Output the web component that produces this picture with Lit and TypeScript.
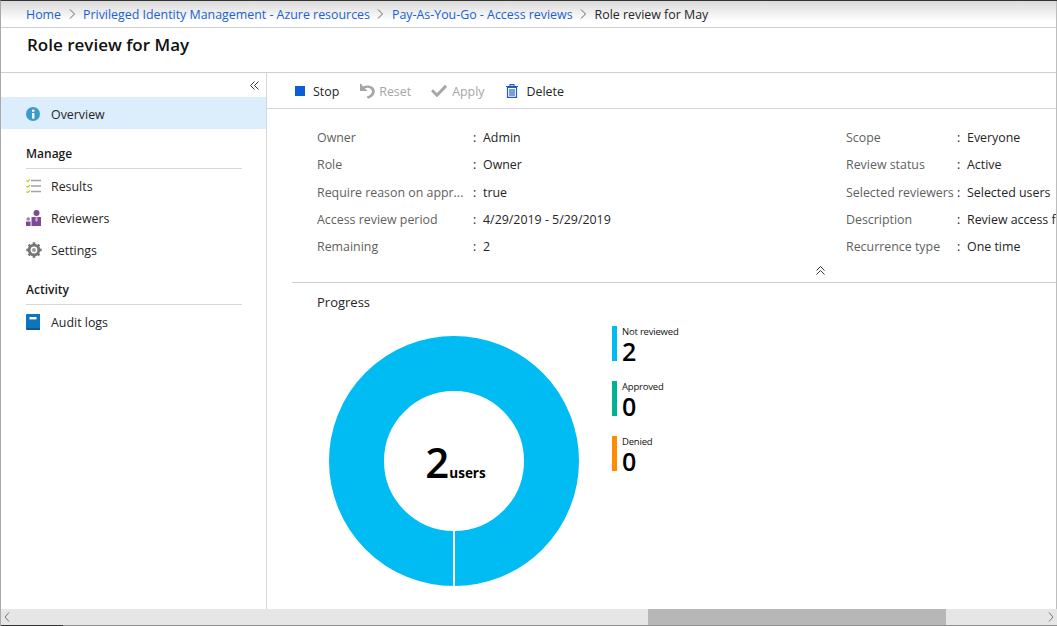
import { LitElement, html, css, svg } from 'lit';
import { customElement } from 'lit/decorators.js';

const chevron = html`<svg class="crumb-sep" width="7" height="10" viewBox="0 0 7 10"><path d="M1 .5 5.500 5 1 9.500" fill="none" stroke="#666" stroke-width="1"/></svg>`;

const icons = {
  info: html`<svg width="14" height="14" viewBox="0 0 14 14"><circle cx="7" cy="7" r="7" fill="#3c9bcb"/><rect x="6" y="6" width="2.400" height="5.600" fill="#fff"/><rect x="6" y="2.600" width="2.400" height="2.200" fill="#fff"/></svg>`,
  results: html`<svg width="15" height="14" viewBox="0 0 15 14">
    <path d="M.5 1.500l1.200 1.200L4 .3M.5 7l1.200 1.200L4 5.800M.5 12.500l1.200 1.200L4 11.300" fill="none" stroke="#b4cf2a" stroke-width="1.100"/>
    <path d="M5 1.500h10M5 7h10M5 12.500h10" stroke="#a3a3a3" stroke-width="1.500"/></svg>`,
  reviewers: html`<svg width="15" height="16" viewBox="0 0 15 16">
    <circle cx="10.500" cy="3" r="3" fill="#804998"/><path d="M5.500 7h9.500v9H5.500z" fill="#804998"/>
    <circle cx="2.200" cy="9" r="1.800" fill="#a67ab8"/><path d="M0 11.500h4.600V16H0z" fill="#804998"/>
    <path d="M9.700 7h1.600l.4 3.500-1.200 1.500-1.200-1.500z" fill="#c9aed6"/></svg>`,
  gear: html`<svg width="16" height="16" viewBox="0 0 16 16"><circle cx="8" cy="8" r="4.800" fill="none" stroke="#767676" stroke-width="3"/>
    <path d="M8 .3v15.400M.3 8h15.400M2.600 2.600l10.800 10.800M13.400 2.600 2.600 13.400" stroke="#767676" stroke-width="2.600"/><circle cx="8" cy="8" r="3.400" fill="#fff"/><circle cx="8" cy="8" r="2" fill="#9a9a9a"/></svg>`,
  book: html`<svg width="14" height="16" viewBox="0 0 14 16"><path d="M0 1a1 1 0 0 1 1-1h13v14H1v2a1 1 0 0 1-1-1z" fill="#0f74bd"/><path d="M0 14.500 1 14h13v2H1z" fill="#0a5a96"/><rect x="3.500" y="3" width="7" height="2.400" fill="#fff"/></svg>`,
  stop: html`<svg width="10" height="10" viewBox="0 0 10 10"><rect width="10" height="10" fill="#0b5ed7"/></svg>`,
  reset: html`<svg width="16" height="16" viewBox="0 0 16 16"><path d="M1 .5V8h7.500L5.800 5.300C8.500 3.800 13 5 13 8.500c0 2.300-2 4-5.500 5.300L9 15.800c4.500-1.500 6.800-4 6.800-7.300 0-5-5.800-7.500-11.800-5L2.500 1.200z" fill="#a6a6a6"/></svg>`,
  apply: html`<svg width="16" height="13" viewBox="0 0 16 13"><path d="M1 6.200l5 5L15 1.800" fill="none" stroke="#a6a6a6" stroke-width="3"/></svg>`,
  trash: html`<svg width="12" height="14" viewBox="0 0 12 14"><path d="M0 2.500h12M4 2V.7h4V2" fill="none" stroke="#1d5fbf" stroke-width="1.200"/><path d="M1.500 3.500h9v9.900h-9z" fill="none" stroke="#1d5fbf" stroke-width="1.200"/><path d="M4 5v7M6 5v7M8 5v7" stroke="#1d5fbf" stroke-width="1.200"/></svg>`,
};

const detailsLeft = [
  ['Owner', 'Admin'],
  ['Role', 'Owner'],
  ['Require reason on appr...', 'true'],
  ['Access review period', '4/29/2019 - 5/29/2019'],
  ['Remaining', '2'],
];
const detailsRight = [
  ['Scope', 'Everyone'],
  ['Review status', 'Active'],
  ['Selected reviewers', 'Selected users'],
  ['Description', 'Review access for'],
  ['Recurrence type', 'One time'],
];
const legend = [
  ['Not reviewed', '2', '#00bcf2'],
  ['Approved', '0', '#00b294'],
  ['Denied', '0', '#ff8c00'],
];

@customElement('app-root')
export class AppRoot extends LitElement {
  static styles = css`
    :host {
      display: flex;
      flex-direction: column;
      width: 1057px;
      height: 626px;
      overflow: hidden;
      background: #fff;
      font-family: 'Open Sans', 'Noto Sans', sans-serif;
      font-size: 12.4px;
      color: #252525;
      border-left: 1px solid #a9a9a9;
      border-top: 1px solid #333;
      box-sizing: border-box;
      position: relative;
    }
    a { color: #1a5fd6; text-decoration: none; }
    .crumbs {
      display: flex;
      align-items: center;
      height: 26px;
      padding-left: 25px;
      gap: 7px;
      white-space: nowrap;
      border-bottom: 1px solid #cfcfcf;
      background: linear-gradient(#dadada, #fff 20px);
      flex: none;
    }
    .crumb-sep { margin: 0 .5px; }
    .title {
      height: 45px;
      flex: none;
      padding: 5px 0 0 26px;
      box-sizing: border-box;
      font-size: 17px;
      font-weight: 600;
      color: #111;
      border-bottom: 1px solid #cfcfcf;
    }
    .body { flex: 1; display: flex; min-height: 0; }
    .side {
      width: 266px;
      flex: none;
      box-sizing: border-box;
      border-right: 1px solid #d6d6d6;
    }
    .collapse {
      height: 24px;
      display: flex;
      justify-content: flex-end;
      align-items: center;
      padding-right: 7px;
    }
    .item {
      display: flex;
      align-items: center;
      height: 32px;
      padding-left: 25px;
    }
    .item.active { background: #dcedfb; box-sizing: border-box; padding-top: 2px; }
    .item .ic { width: 25px; display: flex; align-items: center; flex: none; }
    .group {
      margin: 9px 24px 0 25px;
      height: 31px;
      box-sizing: border-box;
      padding-top: 7px;
      font-weight: 600;
      font-size: 12px;
      color: #1a1a1a;
      border-bottom: 1px solid #d9d9d9;
    }
    .group.second { margin-top: 8px; }
    .group + .item { margin-top: 1px; }
    .main { flex: 1; min-width: 0; display: flex; flex-direction: column; overflow: hidden; }
    .toolbar {
      display: flex;
      align-items: center;
      height: 36px;
      flex: none;
      padding: 1px 0 0 28px;
      box-sizing: border-box;
      border-bottom: 1px solid #d6d6d6;
    }
    .cmd { display: flex; align-items: center; gap: 8px; margin-right: 20px; white-space: nowrap; }
    .cmd.off { color: #a6a6a6; gap: 4px; }
    .cmd.apply { gap: 5px; }
    .cmd.delete { margin-left: 2px; }
    .cmd svg { margin-top: -1px; }
    .details {
      display: flex;
      justify-content: space-between;
      height: 174px;
      flex: none;
      margin-left: 25px;
      padding: 20px 0 0 25px;
      box-sizing: border-box;
      border-bottom: 1px solid #cfcfcf;
      position: relative;
    }
    .col { display: grid; grid-auto-rows: 27.3px; align-content: start; }
    .col.left { grid-template-columns: 156px 10px 200px; }
    .col.right { grid-template-columns: 111px 10px 90px; }
    .col .k { color: #5f5f5f; white-space: nowrap; overflow: hidden; }
    .col .v { white-space: nowrap; }
    .col.right .v { overflow: hidden; }
    .more { position: absolute; left: 524px; top: 157px; line-height: 0; }
    .progress { padding: 10px 0 0 50px; flex: 1; }
    .progress h2 { margin: 0; font-size: 13px; font-weight: 400; color: #252525; line-height: 18px; }
    .chart { display: flex; align-items: flex-start; margin-top: 25px; margin-left: 12px; }
    .donut { position: relative; width: 250px; height: 250px; flex: none; line-height: 0; }
    .center {
      position: absolute;
      left: 3px;
      right: 0;
      top: 104px;
      display: flex;
      justify-content: center;
      align-items: baseline;
      line-height: 44px;
      color: #000;
    }
    .center b { font-size: 42px; font-weight: 600; }
    .center span { font-size: 13.500px; font-weight: 700; }
    .legend { display: flex; flex-direction: column; gap: 19px; margin: -10px 0 0 33px; }
    .entry { display: flex; gap: 5px; height: 36px; }
    .bar { width: 5px; height: 35px; }
    .entry .lbl { font-size: 9.500px; line-height: 12px; height: 13px; color: #111; letter-spacing: -.2px; white-space: nowrap; }
    .entry .num { font-size: 25px; line-height: 24px; color: #000; font-weight: 600; }
    .scrollbar {
      height: 17px;
      flex: none;
      background: #e6e6e6;
      position: relative;
    }
    .thumb { position: absolute; left: 647px; width: 298px; top: 0; bottom: 0; background: #b7b7b7; }
    .arrow { position: absolute; top: 3px; line-height: 0; }
    .edge-right { position: absolute; right: 0; top: 0; bottom: 17px; width: 1px; background: #bdbdbd; }
    .edge-left { position: absolute; left: -1px; top: -1px; height: 178px; width: 1px; background: #333; }
    .edge-bottom { position: absolute; left: -1px; right: 0; bottom: 0; height: 1px; background: #8f8f8f; }
    .edge-bottom-dark { position: absolute; left: -1px; bottom: 0; width: 63px; height: 1px; background: #333; }
  `;

  render() {
    return html`
      <nav class="crumbs">
        <a>Home</a>${chevron}
        <a>Privileged Identity Management - Azure resources</a>${chevron}
        <a>Pay-As-You-Go - Access reviews</a>${chevron}
        <span>Role review for May</span>
      </nav>
      <div class="title">Role review for May</div>
      <div class="body">
        <aside class="side">
          <div class="collapse">
            <svg width="9" height="9" viewBox="0 0 9 9"><path d="M4.500.5.500 4.500l4 4M8.500.5l-4 4 4 4" fill="none" stroke="#333" stroke-width="1"/></svg>
          </div>
          <div class="item active"><span class="ic">${icons.info}</span>Overview</div>
          <div class="group">Manage</div>
          <div class="item"><span class="ic">${icons.results}</span>Results</div>
          <div class="item"><span class="ic">${icons.reviewers}</span>Reviewers</div>
          <div class="item"><span class="ic">${icons.gear}</span>Settings</div>
          <div class="group second">Activity</div>
          <div class="item"><span class="ic">${icons.book}</span>Audit logs</div>
        </aside>
        <main class="main">
          <div class="toolbar">
            <div class="cmd">${icons.stop}Stop</div>
            <div class="cmd off">${icons.reset}Reset</div>
            <div class="cmd off apply">${icons.apply}Apply</div>
            <div class="cmd delete">${icons.trash}Delete</div>
          </div>
          <section class="details">
            ${this.renderCol(detailsLeft, 'left')}
            ${this.renderCol(detailsRight, 'right')}
            <svg class="more" width="9" height="9" viewBox="0 0 9 9"><path d="M.5 4.500l4-4 4 4M.5 8.500l4-4 4 4" fill="none" stroke="#333" stroke-width="1"/></svg>
          </section>
          <section class="progress">
            <h2>Progress</h2>
            <div class="chart">
              <div class="donut">
                <svg width="250" height="250" viewBox="0 0 250 250">
                  ${svg`<circle cx="125" cy="125" r="97.500" fill="none" stroke="#00bcf2" stroke-width="55"/>
                  <rect x="124" y="195" width="2" height="55" fill="#fff"/>`}
                </svg>
                <div class="center"><b>2</b><span>users</span></div>
              </div>
              <div class="legend">
                ${legend.map(([label, n, color]) => html`
                  <div class="entry">
                    <div class="bar" style="background:${color}"></div>
                    <div><div class="lbl">${label}</div><div class="num">${n}</div></div>
                  </div>`)}
              </div>
            </div>
          </section>
        </main>
      </div>
      <div class="scrollbar">
        <svg class="arrow" style="left:3px" width="6" height="10" viewBox="0 0 6 10"><path d="M5 .5 1 5l4 4.500" fill="none" stroke="#777"/></svg>
        <div class="thumb"></div>
        <svg class="arrow" style="right:3px" width="6" height="10" viewBox="0 0 6 10"><path d="M1 .5 5 5 1 9.500" fill="none" stroke="#777"/></svg>
      </div>
      <div class="edge-right"></div>
      <div class="edge-left"></div>
      <div class="edge-bottom"></div>
      <div class="edge-bottom-dark"></div>
    `;
  }

  private renderCol(rows: string[][], side: string) {
    return html`<div class="col ${side}">
      ${rows.map(([k, v]) => html`<div class="k">${k}</div><div>:</div><div class="v">${v}</div>`)}
    </div>`;
  }
}
